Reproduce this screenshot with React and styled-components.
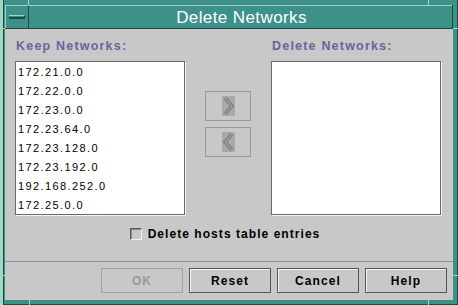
import styled, { createGlobalStyle } from 'styled-components'

const teal = "#3e9189"
const tealDark = "#1d4a45"
const tealLight = "#9fd8c2"
const panel = "#c8c8c8"

const GlobalStyle = createGlobalStyle`
    html, body {
        margin: 0;
        padding: 0;
        background: ${panel};
    }
    body {
        font-family: "Liberation Sans", Arial, sans-serif;
    }
`

const Frame = styled.div({
    position: "relative",
    width: "458px",
    height: "305px",
    boxSizing: "border-box",
    background: teal,
    padding: "5px 5px 5px 5px",
    display: "flex",
    flexDirection: "column",
    boxShadow: `inset 3px 0 0 ${tealLight}, inset 4px 0 0 ${tealDark}, inset -1px -1px 0 ${tealDark}`
})

const Tick = styled.div`
    position: absolute;
    background: ${tealLight};
    ${p => p.$vertical ? "width: 1px; height: 5px;" : "width: 5px; height: 1px;"}
    ${p => p.$top !== undefined ? `top: ${p.$top}px;` : ""}
    ${p => p.$bottom !== undefined ? `bottom: ${p.$bottom}px;` : ""}
    ${p => p.$left !== undefined ? `left: ${p.$left}px;` : ""}
    ${p => p.$right !== undefined ? `right: ${p.$right}px;` : ""}
`

const TitleBar = styled.div({
    height: "24px",
    display: "flex",
    boxSizing: "border-box",
    borderBottom: `1px solid ${tealDark}`,
    borderRight: `1px solid ${tealDark}`
})

const MenuButton = styled.div({
    width: "24px",
    boxSizing: "border-box",
    borderRight: `1px solid ${tealDark}`,
    borderLeft: `1px solid ${tealLight}`,
    borderTop: `1px solid ${tealLight}`,
    padding: "9px 0 0 3px"
})

const MenuBar = styled.div({
    width: "16px",
    height: "4px",
    boxSizing: "border-box",
    borderTop: `1px solid ${tealLight}`,
    borderBottom: `2px solid ${tealDark}`,
    borderRight: `1px solid ${tealDark}`
})

const Title = styled.div({
    flex: 1,
    textAlign: "center",
    color: "white",
    fontSize: "17px",
    lineHeight: "23px",
    letterSpacing: "0.4px",
    borderTop: `1px solid ${tealLight}`,
    paddingLeft: "2px"
})

const Content = styled.div({
    flex: 1,
    background: panel,
    display: "flex",
    flexDirection: "column"
})

const ListsGrid = styled.div({
    display: "grid",
    gridTemplateColumns: "170px 1fr 170px",
    gridTemplateRows: "14px 154px",
    rowGap: "8px",
    padding: "10px 12px 0 10px"
})

const Label = styled.div({
    gridColumn: ({ $col }) => $col,
    fontSize: "12.5px",
    fontWeight: "bold",
    lineHeight: "14px",
    letterSpacing: "1.2px",
    color: "#66669a",
    paddingLeft: "1px",
    whiteSpace: "nowrap"
})

const ListBox = styled.div({
    background: "white",
    border: "1px solid #6a6a6a",
    boxShadow: "1px 1px 0 #f4f4f4",
    padding: "1px 0 0 2px",
    boxSizing: "border-box",
    overflow: "hidden"
})

const ListItem = styled.div({
    height: "19px",
    lineHeight: "19px",
    fontSize: "11px",
    letterSpacing: "1.4px",
    color: "black",
    whiteSpace: "nowrap"
})

const MoveColumn = styled.div({
    display: "flex",
    flexDirection: "column",
    alignItems: "center",
    paddingTop: "30px",
    gap: "6px"
})

const MoveButton = styled.div({
    width: "46px",
    height: "30px",
    boxSizing: "border-box",
    border: "1px solid #999",
    display: "flex",
    alignItems: "center",
    justifyContent: "center"
})

const CheckRow = styled.div({
    marginTop: "12px",
    height: "14px",
    display: "flex",
    alignItems: "center",
    justifyContent: "center",
    gap: "6px",
    paddingRight: "8px"
})

const CheckBox = styled.div({
    width: "12px",
    height: "12px",
    boxSizing: "border-box",
    border: "1px solid #5a5a5a",
    borderRightColor: "#f2f2f2",
    borderBottomColor: "#f2f2f2",
    boxShadow: "inset 1px 1px 0 #8a8a8a"
})

const CheckLabel = styled.span({
    fontSize: "12px",
    fontWeight: "bold",
    letterSpacing: "1.05px",
    color: "black"
})

const Separator = styled.div({
    marginTop: "20px",
    height: "1px",
    background: "#8c8cae"
})

const ButtonRow = styled.div({
    display: "flex",
    justifyContent: "flex-end",
    gap: "6px",
    padding: "6px 6px 7px 0"
})

const Button = styled.div({
    width: "82px",
    height: "25px",
    boxSizing: "border-box",
    border: ({ $disabled }) => `1px solid ${$disabled ? "#a2a2a2" : "#555"}`,
    boxShadow: ({ $disabled }) => $disabled ? "none" : "inset 1px 1px 0 #f6f6f6",
    display: "flex",
    alignItems: "center",
    justifyContent: "center",
    fontSize: "12px",
    fontWeight: "bold",
    letterSpacing: "1.1px",
    color: ({ $disabled }) => $disabled ? "#9a9a9a" : "black"
})

function Chevron({ left }) {
    const pts = left ? "10,2 3,10 10,18" : "3,2 10,10 3,18"
    return <svg width="13" height="20" viewBox="0 0 13 20">
        <rect width="13" height="20" fill="#a9a9a9" />
        <polyline points={pts} fill="none" stroke="#7e7e7e" strokeWidth="3.5" />
        <polyline points={pts} fill="none" stroke="#a0a0a0" strokeWidth="1.2" />
    </svg>
}

const keep = [
    "172.21.0.0",
    "172.22.0.0",
    "172.23.0.0",
    "172.23.64.0",
    "172.23.128.0",
    "172.23.192.0",
    "192.168.252.0",
    "172.25.0.0"
]

export default function App() {
    return <>
        <GlobalStyle />
        <Frame>
            <Tick $vertical $top={0} $left={28} />
            <Tick $vertical $top={0} $right={29} />
            <Tick $vertical $bottom={0} $left={29} />
            <Tick $vertical $bottom={0} $right={29} />
            <Tick $top={28} $left={0} />
            <Tick $top={28} $right={0} />
            <Tick $bottom={29} $left={0} />
            <Tick $bottom={29} $right={0} />
            <TitleBar>
                <MenuButton><MenuBar /></MenuButton>
                <Title>Delete Networks</Title>
            </TitleBar>
            <Content>
                <ListsGrid>
                    <Label $col={1}>Keep Networks:</Label>
                    <Label $col={3}>Delete Networks:</Label>
                    <ListBox>
                        {keep.map(n => <ListItem key={n}>{n}</ListItem>)}
                    </ListBox>
                    <MoveColumn>
                        <MoveButton><Chevron /></MoveButton>
                        <MoveButton><Chevron left /></MoveButton>
                    </MoveColumn>
                    <ListBox />
                </ListsGrid>
                <CheckRow>
                    <CheckBox />
                    <CheckLabel>Delete hosts table entries</CheckLabel>
                </CheckRow>
                <Separator />
                <ButtonRow>
                    <Button $disabled>OK</Button>
                    <Button>Reset</Button>
                    <Button>Cancel</Button>
                    <Button>Help</Button>
                </ButtonRow>
            </Content>
        </Frame>
    </>
}
